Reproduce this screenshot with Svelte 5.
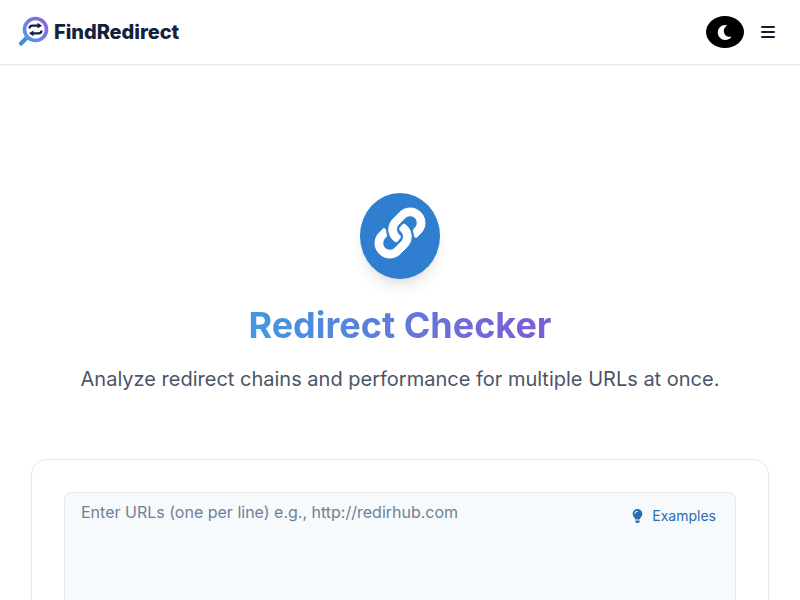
<script>
  const placeholder = 'Enter URLs (one per line) e.g., http://redirhub.com';
</script>

<div class="page">
  <header class="nav">
    <a class="brand" href="#top">
      <svg class="logo" viewBox="0 0 32 32" width="32" height="32" aria-hidden="true">
        <defs>
          <linearGradient id="ring" x1="0" y1="1" x2="1" y2="0">
            <stop offset="0" stop-color="#4f9be8" />
            <stop offset="1" stop-color="#9060d8" />
          </linearGradient>
        </defs>
        <path d="M8.5 22 L3 27.5" stroke="#3f8fe0" stroke-width="4.2" stroke-linecap="round" />
        <circle cx="17.5" cy="13.5" r="11" fill="#fff" stroke="url(#ring)" stroke-width="3.6" />
        <path d="M11.5 12.5c0-2 1.2-2.8 3-2.8h6" stroke="#12204a" stroke-width="2.2" fill="none" />
        <path d="M19.5 6.8l4.6 2.9-4.6 2.9z" fill="#12204a" />
        <path d="M23.5 14.5c0 2-1.2 2.8-3 2.8h-6" stroke="#12204a" stroke-width="2.2" fill="none" />
        <path d="M15.5 14.4l-4.6 2.9 4.6 2.9z" fill="#12204a" />
      </svg>
      <span class="brand-name">FindRedirect</span>
    </a>
    <div class="nav-actions">
      <button class="theme" aria-label="Toggle theme">
        <svg class="moon" viewBox="0 0 512 512" width="15" height="15" aria-hidden="true"><path fill="#fff" d="M283.211 512c78.962 0 151.079-35.925 198.857-94.792 7.068-8.708-.639-21.43-11.562-19.35-124.203 23.654-238.262-71.576-238.262-196.954 0-72.222 38.662-138.635 101.498-174.394 9.686-5.512 7.25-20.197-3.756-22.23A258.156 258.156 0 0 0 283.211 0c-141.309 0-256 114.511-256 256 0 141.309 114.511 256 256 256z"/></svg>
      </button>
      <button class="menu" aria-label="Menu">
        <span></span><span></span><span></span>
      </button>
    </div>
  </header>

  <main>
    <section class="hero">
      <div class="hero-icon">
        <svg class="link" viewBox="0 0 512 512" width="50" height="50" aria-hidden="true"><path fill="#fff" stroke="#fff" stroke-width="10" d="M326.612 185.391c59.747 59.809 58.927 155.698.36 214.59-.11.12-.24.25-.36.37l-67.2 67.2c-59.27 59.27-155.699 59.262-214.96 0-59.27-59.26-59.27-155.7 0-214.96l37.106-37.106c9.84-9.84 26.786-3.3 27.294 10.606.648 17.722 3.826 35.527 9.69 52.721 1.986 5.822.567 12.262-3.783 16.612l-13.087 13.087c-28.026 28.026-28.905 73.66-1.155 101.96 28.024 28.579 74.086 28.749 102.325.51l67.2-67.19c28.191-28.191 28.073-73.757 0-101.83-3.701-3.694-7.429-6.564-10.341-8.569a16.037 16.037 0 0 1-6.947-12.606c-.396-10.567 3.348-21.456 11.698-29.806l21.054-21.055c5.521-5.521 14.182-6.199 20.584-1.731a152.482 152.482 0 0 1 20.522 17.197zM467.547 44.449c-59.261-59.262-155.69-59.27-214.96 0l-67.2 67.2c-.12.12-.25.25-.36.37-58.566 58.892-59.387 154.781.36 214.59a152.454 152.454 0 0 0 20.521 17.196c6.402 4.468 15.064 3.789 20.584-1.731l21.054-21.055c8.35-8.35 12.094-19.239 11.698-29.806a16.037 16.037 0 0 0-6.947-12.606c-2.912-2.005-6.64-4.875-10.341-8.569-28.073-28.073-28.191-73.639 0-101.83l67.2-67.19c28.239-28.239 74.3-28.069 102.325.51 27.75 28.3 26.872 73.934-1.155 101.96l-13.087 13.087c-4.35 4.35-5.769 10.79-3.783 16.612 5.864 17.194 9.042 34.999 9.69 52.721.509 13.906 17.454 20.446 27.294 10.606l37.106-37.106c59.271-59.259 59.271-155.699.001-214.959z"/></svg>
      </div>
      <h1>Redirect Checker</h1>
      <p>Analyze redirect chains and performance for multiple URLs at once.</p>
    </section>

    <section class="card">
      <div class="field">
        <span class="placeholder">{placeholder}</span>
        <button class="examples">
          <svg viewBox="0 0 352 512" width="11" height="14" aria-hidden="true"><path fill="#2b6cb0" d="M96.06 454.35c.01 6.29 1.87 12.45 5.36 17.69l17.09 25.69a31.99 31.99 0 0 0 26.64 14.28h61.71a31.99 31.99 0 0 0 26.64-14.28l17.09-25.69a31.989 31.989 0 0 0 5.36-17.69l.04-38.35H96.01l.05 38.35zM0 176c0 44.37 16.45 84.85 43.56 115.78 16.52 18.85 42.36 58.23 52.21 91.45.04.26.07.52.11.78h160.24c.04-.26.07-.51.11-.78 9.85-33.22 35.69-72.6 52.21-91.45C335.55 260.85 352 220.37 352 176 352 78.61 272.91-.3 175.45 0 73.44.31 0 82.97 0 176zm176-80c-44.11 0-80 35.89-80 80 0 8.84-7.16 16-16 16s-16-7.16-16-16c0-61.76 50.24-112 112-112 8.84 0 16 7.16 16 16s-7.16 16-16 16z"/></svg>
          <span>Examples</span>
        </button>
      </div>
    </section>
  </main>
</div>

<style>
  :global(body) {
    margin: 0;
    background: #fff;
    font-family: Inter, "Liberation Sans", sans-serif;
  }
  .page {
    height: 600px;
    overflow: hidden;
  }
  .nav {
    height: 64px;
    display: flex;
    align-items: center;
    justify-content: space-between;
    padding: 0 25px 0 18px;
    border-bottom: 1px solid #e5e7eb;
    box-shadow: 0 1px 3px rgba(0, 0, 0, 0.04);
  }
  .brand {
    display: flex;
    align-items: center;
    gap: 4px;
    text-decoration: none;
  }
  .brand-name {
    font-size: 20px;
    font-weight: 800;
    letter-spacing: -0.05px;
    color: #14213d;
  }
  .nav-actions {
    display: flex;
    align-items: center;
    gap: 17px;
  }
  button {
    border: 0;
    background: none;
    padding: 0;
    font: inherit;
  }
  .theme {
    width: 38px;
    height: 32px;
    border-radius: 50%;
    background: #000;
    display: flex;
    align-items: center;
    justify-content: center;
  }
  .moon {
    margin-right: 2px;
  }
  .menu {
    width: 14px;
    display: flex;
    flex-direction: column;
    gap: 2.4px;
  }
  .menu span {
    height: 2.6px;
    border-radius: 1px;
    background: #1a1a2e;
  }
  .hero {
    padding-top: 128px;
    display: flex;
    flex-direction: column;
    align-items: center;
  }
  .hero-icon {
    width: 80px;
    height: 86px;
    box-sizing: border-box;
    padding-bottom: 6px;
    border-radius: 50%;
    background: #2f7ed0;
    display: flex;
    align-items: center;
    justify-content: center;
    box-shadow: 0 10px 15px -3px rgba(0, 0, 0, 0.1), 0 4px 6px -2px rgba(0, 0, 0, 0.05);
  }
  .link {
    overflow: visible;
  }
  h1 {
    margin: 24px 0 0;
    font-size: 36px;
    line-height: 44px;
    font-weight: 700;
    background: linear-gradient(90deg, #4299e1, #805ad5);
    -webkit-background-clip: text;
    background-clip: text;
    color: transparent;
  }
  .hero p {
    margin: 18px 0 0;
    font-size: 20px;
    line-height: 28px;
    color: #4a5568;
  }
  .card {
    margin: 66px 31px 0;
    padding: 32px;
    height: 300px;
    background: #fff;
    border: 1px solid #e5e7eb;
    border-radius: 16px;
    box-shadow: 0 4px 6px -1px rgba(0, 0, 0, 0.05);
  }
  .field {
    height: 240px;
    background: #f7fafc;
    border: 1px solid #e2e8f0;
    border-radius: 8px;
    display: flex;
    justify-content: space-between;
    align-items: flex-start;
    padding: 8px 19px 0 16px;
  }
  .placeholder {
    font-size: 16px;
    line-height: 22px;
    color: #718096;
  }
  .examples {
    display: flex;
    align-items: center;
    gap: 9px;
    margin-top: 5px;
    font-size: 14px;
    line-height: 20px;
    color: #2b6cb0;
  }
</style>
